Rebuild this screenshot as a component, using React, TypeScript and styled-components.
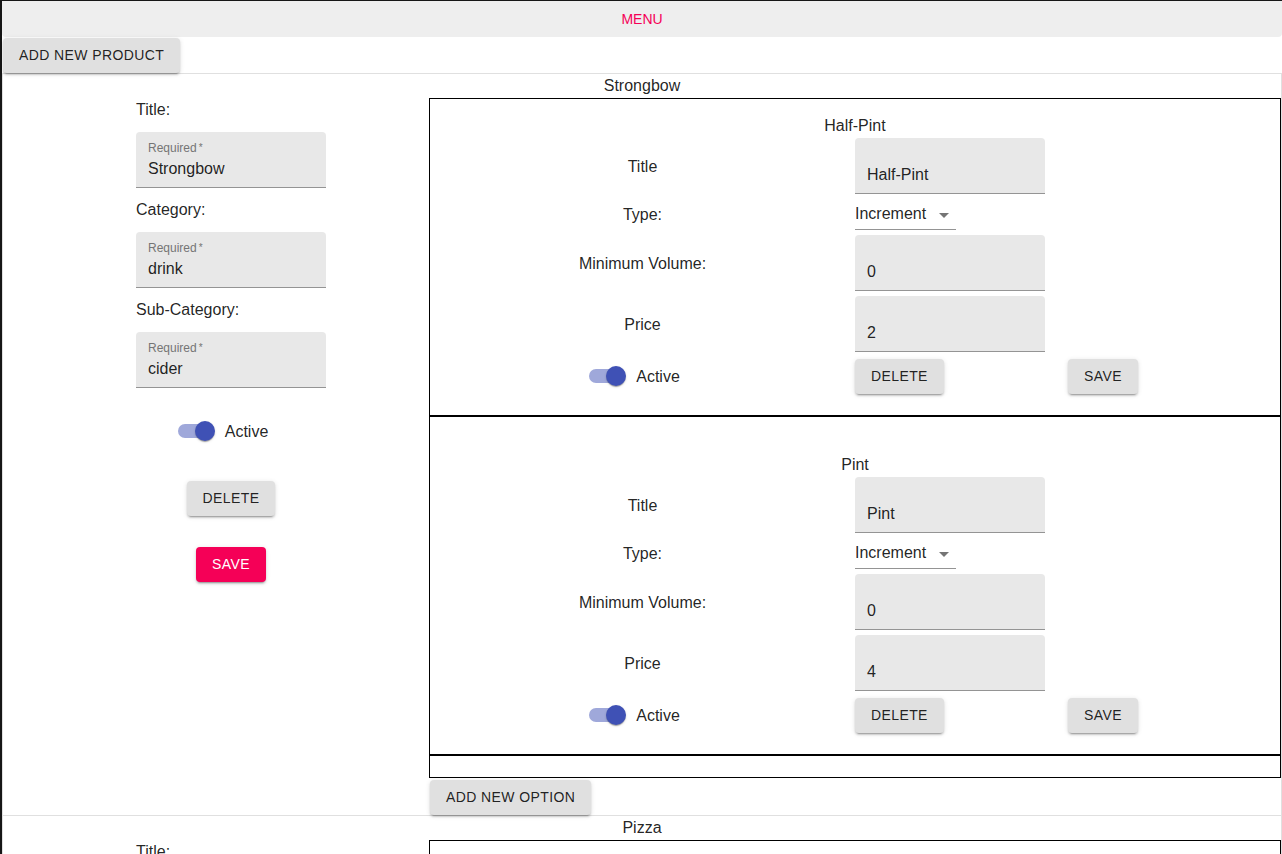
import React from "react";
import styled, { createGlobalStyle } from "styled-components";

const GlobalStyle = createGlobalStyle`
  html, body {
    margin: 0;
    padding: 0;
    overflow: hidden;
    background: #ffffff;
  }
  body {
    font-family: "Liberation Sans", Helvetica, Arial, sans-serif;
    font-size: 16px;
    color: rgba(0, 0, 0, 0.87);
  }
  * { box-sizing: border-box; }
`;

const Frame = styled.div`
  border-left: 2px solid #161616;
  border-top: 1px solid #161616;
  min-height: 100vh;
`;

const MenuBar = styled.nav`
  height: 36px;
  background: #eeeeee;
  border-radius: 0 0 4px 4px;
  display: flex;
  align-items: center;
  justify-content: center;
  color: #f50057;
  font-size: 14px;
  text-transform: uppercase;
`;

const ToolbarRow = styled.div`
  display: flex;
  padding: 1px 0 0 1px;
`;

const Button = styled.button<{ $pink?: boolean }>`
  font-family: "Liberation Sans", Helvetica, Arial, sans-serif;
  font-size: 14px;
  line-height: 23px;
  letter-spacing: 0.4px;
  text-transform: uppercase;
  padding: 6px 16px;
  min-width: 64px;
  border: none;
  border-radius: 4px;
  cursor: pointer;
  background: ${(p) => (p.$pink ? "#f50057" : "#e0e0e0")};
  color: ${(p) => (p.$pink ? "#ffffff" : "rgba(0, 0, 0, 0.87)")};
  box-shadow: 0px 3px 1px -2px rgba(0, 0, 0, 0.2),
    0px 2px 2px 0px rgba(0, 0, 0, 0.14), 0px 1px 5px 0px rgba(0, 0, 0, 0.12);
`;

const ProductSection = styled.section`
  border: 1px solid #e0e0e0;
  border-bottom: none;
`;

const ProductHeading = styled.div`
  text-align: center;
  line-height: 24px;
  font-size: 16px;
`;

const ProductRow = styled.div`
  display: grid;
  grid-template-columns: 426px 1fr;
  align-items: start;
`;

const LeftColumn = styled.div`
  display: flex;
  flex-direction: column;
  align-items: center;
  padding-left: 30px;
`;

const FieldGroup = styled.div`
  width: 190px;
  display: flex;
  flex-direction: column;
`;

const FieldLabel = styled.div<{ $first?: boolean }>`
  line-height: 20px;
  margin: ${(p) => (p.$first ? 2 : 12)}px 0 12px;
`;

const FilledField = styled.div`
  position: relative;
  width: 190px;
  background: #e8e8e8;
  border-radius: 4px 4px 0 0;
  border-bottom: 1px solid #949494;
  padding: 27px 12px 9px;
  line-height: 19px;
  font-size: 16px;
`;

const FloatingLabel = styled.span`
  position: absolute;
  top: 9px;
  left: 12px;
  font-size: 12px;
  line-height: 14px;
  color: #757575;
`;

const Asterisk = styled.span`
  font-size: 10px;
  vertical-align: top;
  margin-left: 2px;
`;

const ToggleRow = styled.label<{ $top?: number }>`
  display: flex;
  align-items: center;
  justify-content: center;
  gap: 10px;
  height: 38px;
  padding-right: 16px;
  margin-top: ${(p) => p.$top ?? 0}px;
`;

const SwitchBox = styled.span`
  position: relative;
  width: 37px;
  height: 20px;
  flex: none;
`;

const SwitchTrack = styled.span`
  position: absolute;
  left: 0;
  top: 3px;
  width: 34px;
  height: 14px;
  border-radius: 7px;
  background: #9fa8da;
`;

const SwitchThumb = styled.span`
  position: absolute;
  left: 17px;
  top: 0;
  width: 20px;
  height: 20px;
  border-radius: 50%;
  background: #3f51b5;
  box-shadow: 0px 2px 1px -1px rgba(0, 0, 0, 0.2),
    0px 1px 1px 0px rgba(0, 0, 0, 0.14), 0px 1px 3px 0px rgba(0, 0, 0, 0.12);
`;

const ToggleText = styled.span`
  font-size: 16px;
  line-height: 19px;
`;

const LeftButtonSlot = styled.div<{ $top: number }>`
  margin-top: ${(p) => p.$top}px;
`;

const RightColumn = styled.div`
  display: flex;
  flex-direction: column;
  align-items: flex-start;
`;

const OptionsBox = styled.div`
  align-self: stretch;
  border: 1px solid #000000;
  padding-bottom: 21px;
`;

const OptionCard = styled.div<{ $first?: boolean }>`
  border-bottom: 2px solid #000000;
  padding: ${(p) => (p.$first ? 17 : 38)}px 0 20px;
`;

const OptionHeading = styled.div`
  text-align: center;
  line-height: 19px;
  margin-bottom: 3px;
`;

const OptionGrid = styled.div`
  display: grid;
  grid-template-columns: 425px 213px 1fr;
  row-gap: 5px;
  align-items: center;
`;

const CellLabel = styled.div`
  justify-self: center;
  line-height: 19px;
`;

const Cell = styled.div`
  justify-self: start;
`;

const Spacer = styled.div``;

const SelectBox = styled.div`
  position: relative;
  width: 101px;
  padding: 5px 24px 6px 0;
  line-height: 19px;
  border-bottom: 1px solid #949494;
  white-space: nowrap;
`;

const SelectIcon = styled.svg`
  position: absolute;
  right: 0;
  top: calc(50% - 11px);
  width: 24px;
  height: 24px;
  fill: rgba(0, 0, 0, 0.54);
`;

const AddOptionSlot = styled.div`
  margin: 2px 0 0 1px;
`;

type Option = { title: string; type: string; min: string; price: string };
type Product = {
  title: string;
  category: string;
  sub: string;
  options: Option[];
};

const products: Product[] = [
  {
    title: "Strongbow",
    category: "drink",
    sub: "cider",
    options: [
      { title: "Half-Pint", type: "Increment", min: "0", price: "2" },
      { title: "Pint", type: "Increment", min: "0", price: "4" },
    ],
  },
  {
    title: "Pizza",
    category: "food",
    sub: "pizza",
    options: [{ title: "Regular", type: "Increment", min: "0", price: "8" }],
  },
];

const Toggle: React.FC<{ top?: number }> = ({ top }) => (
  <ToggleRow $top={top}>
    <SwitchBox>
      <SwitchTrack />
      <SwitchThumb />
    </SwitchBox>
    <ToggleText>Active</ToggleText>
  </ToggleRow>
);

const RequiredField: React.FC<{ value: string }> = ({ value }) => (
  <FilledField>
    <FloatingLabel>
      Required<Asterisk>*</Asterisk>
    </FloatingLabel>
    {value}
  </FilledField>
);

const OptionEditor: React.FC<{ option: Option; first: boolean }> = ({
  option,
  first,
}) => (
  <OptionCard $first={first}>
    <OptionHeading>{option.title}</OptionHeading>
    <OptionGrid>
      <CellLabel>Title</CellLabel>
      <Cell>
        <FilledField>{option.title}</FilledField>
      </Cell>
      <Spacer />

      <CellLabel>Type:</CellLabel>
      <Cell>
        <SelectBox>
          {option.type}
          <SelectIcon viewBox="0 0 24 24">
            <path d="M7 10l5 5 5-5z" />
          </SelectIcon>
        </SelectBox>
      </Cell>
      <Spacer />

      <CellLabel>Minimum Volume:</CellLabel>
      <Cell>
        <FilledField>{option.min}</FilledField>
      </Cell>
      <Spacer />

      <CellLabel>Price</CellLabel>
      <Cell>
        <FilledField>{option.price}</FilledField>
      </Cell>
      <Spacer />

      <Toggle />
      <Cell>
        <Button>Delete</Button>
      </Cell>
      <Cell>
        <Button>Save</Button>
      </Cell>
    </OptionGrid>
  </OptionCard>
);

const ProductEditor: React.FC<{ product: Product }> = ({ product }) => (
  <ProductSection>
    <ProductHeading>{product.title}</ProductHeading>
    <ProductRow>
      <LeftColumn>
        <FieldGroup>
          <FieldLabel $first>Title:</FieldLabel>
          <RequiredField value={product.title} />
          <FieldLabel>Category:</FieldLabel>
          <RequiredField value={product.category} />
          <FieldLabel>Sub-Category:</FieldLabel>
          <RequiredField value={product.sub} />
        </FieldGroup>
        <Toggle top={24} />
        <LeftButtonSlot $top={31}>
          <Button>Delete</Button>
        </LeftButtonSlot>
        <LeftButtonSlot $top={31}>
          <Button $pink>Save</Button>
        </LeftButtonSlot>
      </LeftColumn>
      <RightColumn>
        <OptionsBox>
          {product.options.map((o, i) => (
            <OptionEditor key={o.title} option={o} first={i === 0} />
          ))}
        </OptionsBox>
        <AddOptionSlot>
          <Button>Add New Option</Button>
        </AddOptionSlot>
      </RightColumn>
    </ProductRow>
  </ProductSection>
);

export default function App() {
  return (
    <>
      <GlobalStyle />
      <Frame>
        <MenuBar>Menu</MenuBar>
        <ToolbarRow>
          <Button>Add New Product</Button>
        </ToolbarRow>
        {products.map((p) => (
          <ProductEditor key={p.title} product={p} />
        ))}
      </Frame>
    </>
  );
}
